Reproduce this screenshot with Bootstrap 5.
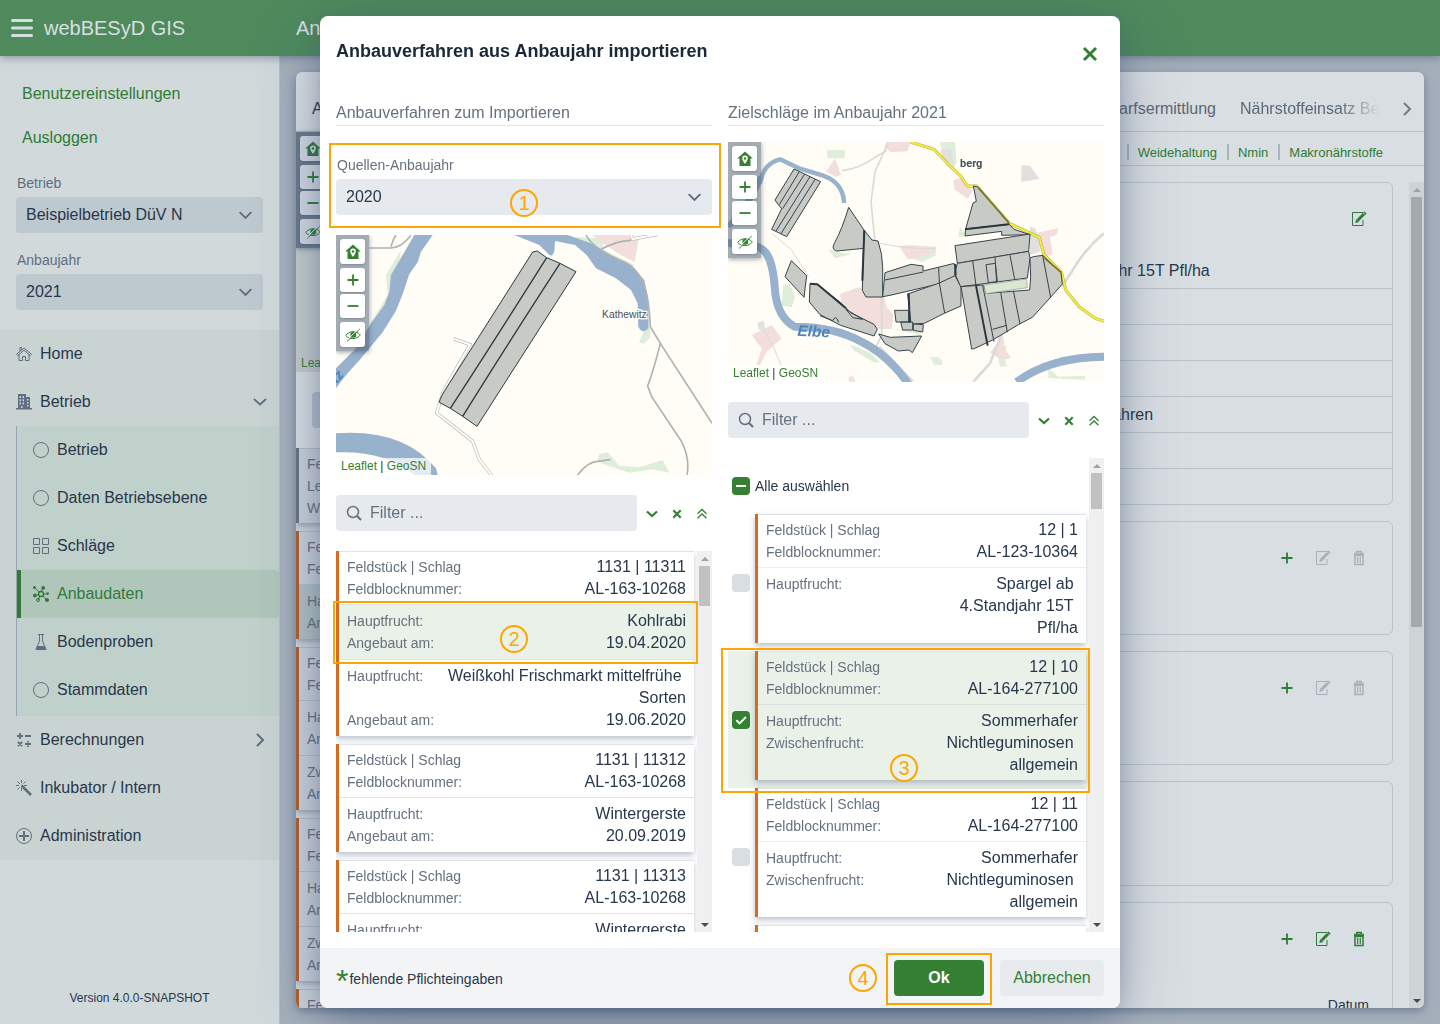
<!DOCTYPE html>
<html lang="de">
<head>
<meta charset="utf-8">
<meta name="viewport" content="width=device-width, initial-scale=1">
<title>webBESyD GIS</title>
<link rel="stylesheet" href="https://cdn.jsdelivr.net/npm/bootstrap@5.3.0/dist/css/bootstrap.min.css">
<style>
:root{--green:#368034;--ink:#28374b;--muted:#66717f;--dimgreen:#2f7b38;--line:#b9c3cc}
body{font-family:"Liberation Sans",Arial,sans-serif;font-size:16px;line-height:24px;color:var(--ink);background:#a5afbb;overflow:hidden}
a{text-decoration:none;color:var(--dimgreen)}
button{font-family:inherit}
svg{display:block}
.ico{width:16px;height:16px;fill:none;stroke:currentColor;flex:none}
.plain-btn{border:0;background:none;padding:0;color:var(--green);display:flex;align-items:center;justify-content:center}
.shrinkable{min-width:0;min-height:0}
/* App shell */
.topbar{height:56px;background:#4f8a5d;color:#d8dfe1;font-size:20px;box-shadow:0 2px 8px rgba(60,80,110,.5);z-index:2}
.topbar h2,.topbar h1{font-size:20px;line-height:24px;font-weight:400;margin:0}
.brand-part{width:296px}
.side{width:280px;background:#d1d9db;border-right:1px solid #b3bec9}
.side-links{padding:26px 22px 0}
.side-links a{display:block;line-height:24px;margin-bottom:20px}
.field-label{display:block;font-size:14px;line-height:20px;color:#616e80;margin-bottom:4px;padding-left:1px}
.field-select{height:36px;border:0;border-radius:4px;padding:0 36px 0 10px;font-size:16px;color:var(--ink);background-color:#bec8cf;background-position:right 11px center;background-size:13px 9px;
 background-image:url("data:image/svg+xml,%3csvg xmlns='http://www.w3.org/2000/svg' viewBox='0 0 13 9'%3e%3cpath fill='none' stroke='%235d6b7d' stroke-width='1.8' stroke-linecap='round' d='M1.2 1.7l5.3 5.2 5.3-5.2'/%3e%3c/svg%3e")}
.side-fields{padding:0 16px;margin-top:3px}
.side-fields .first-select{margin-bottom:17px}
.side-nav{background:#c9d3d2;margin-top:20px}
.side-nav a{display:flex;align-items:center;height:48px;padding:0 11px 0 16px;gap:8px;color:var(--ink)}
.side-nav a>.ico{color:#5f6e80}
.side-sub{margin-left:16px;border-left:1px solid #97a4ad;background:#c0d0ca;padding-bottom:2px}
.side-sub a{padding-left:16px}
.side-sub a.current{background:#b0c6ba;color:var(--dimgreen);border-left:4px solid var(--dimgreen);padding-left:12px;border-radius:0 4px 4px 0}
.side-sub a.current>.ico{color:var(--dimgreen)}
.version{font-size:12px;line-height:20px;padding-bottom:16px}
.panel{background:#d9dee2;border-radius:6px;box-shadow:0 3px 8px rgba(60,80,110,.5);overflow:hidden}
.tabs{height:60px;border-bottom:1px solid var(--line);color:#5b6878;padding:25px 9px 0 16px}
.tab-on{color:var(--ink)}
.tab-fade{-webkit-mask-image:linear-gradient(90deg,#000 72%,transparent 102%);mask-image:linear-gradient(90deg,#000 72%,transparent 102%);width:138px;overflow:hidden;white-space:nowrap}
.tab-next{color:#6c7b90;margin:4px 0 0 21px}
.left-col{width:224px}
.back-map{height:240px;background:linear-gradient(#8f9ca5 0 116px,#c6ccce 116px)}
.back-filter{height:36px;margin:20px 16px;background:#b8c1ce;border-radius:4px}
.subnav{height:34px;border-bottom:1px solid var(--line);font-size:13px;padding:12px 41px 0 0}
.subnav a{line-height:18px;height:16px;display:block;padding-left:9px;border-left:2px solid #a9b4c1;margin-left:10px}
.detail-list{padding:16px 16px 0;overflow:hidden}
.box{border:1px solid var(--line);border-radius:6px;padding:18px 15px 18px 17px;margin-bottom:16px}
.box-main{padding-bottom:35px}
.box-mid{min-height:114px}
.box-low{min-height:105px}
.box-tools{height:36px}
.box-tools button{width:36px;height:36px}
.box-tools .plain-btn{color:var(--dimgreen)}
.box-tools .plain-btn:disabled{color:#a7b1bb}
.info-row{height:36px;border-bottom:1px solid var(--line);margin:0 -15px 0 -17px;padding:6px 0 6px 9px}
.date-head{font-size:14px;line-height:48px}
/* Scroll tracks */
.track{width:15px;background:#f0f0f0;flex:none}
.track i{display:block;height:15px}
.track i::before{content:"";display:block;width:0;margin:0 auto;border:4px solid transparent;border-top:0;border-bottom:4px solid #a0a0a0;transform:translateY(6px)}
.track i:last-child::before{border-bottom:0;border-top:4px solid #454b52}
.thumb{width:11px;margin:0 auto;background:#c1c1c1}
.track-dim{background:#ced4d6}
.track-dim .thumb{background:#a3a9ac}
/* Field cards */
.plot{border-left:3px solid #d56a20;background:#fff;box-shadow:0 3px 6px rgba(60,80,110,.35);margin-bottom:8px}
.plot-part{border-top:1px solid #dfe3e8;padding:5px 8px;line-height:22px}
.plot-part:first-child{padding:4px 8px}
.plot-part.chosen{background:#e9f1e9}
.plot-row{display:flex;justify-content:space-between;gap:8px}
.plot-row span:first-child{font-size:14px;color:var(--muted);white-space:nowrap}
.plot-row span:last-child{text-align:right}
.list-area{min-height:0;flex:1 1 0}
.list-scroll{overflow-y:auto;scrollbar-width:none}
.list-scroll::-webkit-scrollbar{display:none}
.back-list .plot{background:#ccd2db;border-left-color:#ae602c;box-shadow:0 3px 6px rgba(60,80,110,.4)}
.back-list .plot-part{border-color:#b3bdc6;font-size:14px;color:#586576}
.back-list .plot-part.chosen{background:#b4c1c4}
.back-list .plot.neutral{border-left-color:#687583}
/* Dialog */
.veil{position:fixed;inset:0;z-index:10;padding:16px;display:flex;justify-content:center}
.dlg{position:relative;width:800px;max-width:100%;background:#fff;border-radius:8px;box-shadow:0 6px 24px -3px rgba(50,72,108,.35),0 18px 64px -8px rgba(50,72,108,.45)}
.dlg-head{height:85px;padding:23px 14px 0 16px}
.dlg-head h2{font-size:18px;line-height:24px;font-weight:700;color:#1a2838;margin:0}
.dlg-head .plain-btn{width:28px;height:28px}
.dlg-body{padding:0 16px 16px;gap:16px;min-height:0}
.dlg-col{flex:1 1 0;min-width:0;min-height:0}
.dlg-col h3{font-size:16px;line-height:24px;font-weight:400;color:var(--muted);border-bottom:1px solid #e3e6ea;margin:0}
.source-year{padding-top:29px;margin-bottom:20px}
.dlg .field-select{background-color:#e6e9ee}
.dlg .field-label{color:var(--muted)}
.map-right{margin-top:16px}
.map{position:relative;height:240px;overflow:hidden;background:#fffdf5}
.map>svg{width:100%;height:100%}
.map-tools,.back-tools{width:33px;height:116px;background:rgba(72,90,114,.5);box-shadow:0 1px 5px rgba(50,70,100,.5);padding:4px}
.map-tools{position:absolute;left:0;top:0}
.map-tools .plain-btn,.back-tools .plain-btn{width:25px;height:25px;background:#fff;border-radius:3px;margin-bottom:4px;box-shadow:0 1px 2px rgba(50,70,100,.3)}
.back-tools .plain-btn{background:#d5dae2;color:var(--dimgreen)}
.map-tools .zin,.map-tools .zout,.back-tools .zin,.back-tools .zout{height:24px}
.map-tools .zin,.back-tools .zin{margin-bottom:2px}
.credit{position:absolute;left:0;bottom:0;background:rgba(255,255,255,.75);font-size:12px;line-height:17px;padding:0 5px;color:#333}
.credit a{color:var(--green)}
.filter-row{height:36px;margin:20px -2px 20px 0}
.filter-box{height:36px;background:#e6e9ee;border-radius:4px;padding:0 10px;gap:8px;color:#66727f}
.filter-box input{border:0;background:none;outline:0;width:100%;font-size:16px;color:var(--ink);padding:0}
.filter-box input::placeholder{color:#66727f;opacity:1}
.filter-row>.plain-btn{width:25px;height:38px}
.filter-row>.filter-box{margin-right:2px}
.list-left{padding-right:3px}
.pick-all{height:56px;font-size:14px;padding-left:4px;gap:5px}
.form-check-input.tick{width:18px;height:18px;margin:0;border:0;border-radius:4px;background-color:#d9dee2;flex:none}
.form-check-input.tick:checked,.form-check-input.tick:indeterminate{background-color:var(--green)}
.form-check-input.tick:checked{background-image:url("data:image/svg+xml,%3csvg xmlns='http://www.w3.org/2000/svg' viewBox='0 0 18 18'%3e%3cpath fill='none' stroke='%23fff' stroke-width='1.9' d='M4.300 9.200l3.200 3.200L14 6'/%3e%3c/svg%3e")}
.form-check-input.tick:indeterminate{background-image:url("data:image/svg+xml,%3csvg xmlns='http://www.w3.org/2000/svg' viewBox='0 0 18 18'%3e%3cpath stroke='%23fff' stroke-width='2' d='M4 9h10'/%3e%3c/svg%3e")}
.pick{display:flex;align-items:stretch;padding-left:4px}
.pick .form-check-input.tick{align-self:center;margin-right:5px}
.pick .plot{flex:1 1 auto;min-width:0;margin-right:3px}
.pick .plot-part+.plot-part{border-top-color:rgba(40,60,90,.09);padding-bottom:4px}
.pick.chosen,.pick.chosen .plot{background:#e9f1e9}
.pick .plot-row span:last-child{max-width:140px}
.dlg-foot{height:60px;background:#f3f4f6;border-radius:0 0 8px 8px;padding:0 16px;gap:16px}
.star{color:var(--green);font-size:32px;line-height:24px;height:18px}
.foot-note{font-size:14px;padding:2px 0 0 1px}
.act{height:36px;border:0;border-radius:4px;font-size:16px}
.act-ok{width:90px;background:var(--green);color:#fff;font-weight:700}
.act-no{width:104px;background:#e8ebee;color:var(--green)}
.thumb-left{height:40px}.thumb-right{height:36px}.thumb-back{height:52%}
/* Numbered guide marks over the dialog */
.frame{position:absolute;border:2px solid #ffa500;pointer-events:none}
.step{position:absolute;width:28px;height:28px;border:2px solid #ffa500;border-radius:50%;color:#ffa500;font-size:20px;line-height:25px;text-align:center;pointer-events:none}
.f1{left:9px;top:127px;width:392px;height:85px}.f2{left:13px;top:585px;width:365px;height:63px}
.f3{left:401px;top:632px;width:369px;height:145px}.f4{left:566px;top:937px;width:106px;height:52px}
.s1{left:190px;top:173px}.s2{left:180px;top:609px}.s3{left:570px;top:738px}.s4{left:529px;top:948px}
</style>
</head>
<body>
<svg width="0" height="0" class="position-absolute" aria-hidden="true">
 <symbol id="home" viewBox="0 0 16 16"><path d="M.5 8.3L8 2l7.500 6.300L14.300 9.500 8 4.200 1.700 9.500z M3 8.500V14.500H6.500V10.500H9.500V14.500H13V8.500M4 5V1.500H5.500V3.500"/></symbol>
 <symbol id="build" viewBox="0 0 16 16"><path fill="currentColor" stroke="none" fill-rule="evenodd" d="M2 0h8v3h4v11h2v1.500H0V14h2zM3.500 2v2h1.500V2zm3 0v2H8V2zm-3 3.200v2h1.500v-2zm3 0v2H8v-2zm-3 3.200v2h1.500v-2zm3 0v2H8v-2zM5 12v2h1.500v-2zM11 5v1.500h1.500V5zm0 3v1.500h1.500V8zm0 3v1.500h1.500V11z"/></symbol>
 <symbol id="ring" viewBox="0 0 16 16"><circle cx="8" cy="8" r="7.500"/></symbol>
 <symbol id="grid4" viewBox="0 0 16 16"><path d="M.5.500h6v6h-6zM9.500.500h6v6h-6zM.5 9.500h6v6h-6zM9.500 9.500h6v6h-6z"/></symbol>
 <symbol id="nodes" viewBox="0 0 16 16"><path d="M2 2l4 4M10 2L8.500 5M11 8h4M2 9.500L5.500 8.500M7 10.500L5 14M10 10l4 4"/><circle cx="8" cy="8" r="2.500" stroke-width="1.400"/><g fill="currentColor" stroke="none"><circle cx="1.500" cy="1.500" r="1.500"/><circle cx="10.200" cy="1.900" r="1.900"/><circle cx="14.700" cy="7.500" r="1.300"/><circle cx="1.900" cy="9.500" r="1.900"/><circle cx="14" cy="14" r="2"/></g><circle cx="5" cy="14" r="1.500"/></symbol>
 <symbol id="flask" viewBox="0 0 16 16"><path d="M5 .500h6M6.500.500V7L3 15.500h10L9.500 7V.500"/><path fill="currentColor" d="M4.500 12.500h7l1.500 3H3z"/></symbol>
 <symbol id="calc" viewBox="0 0 16 16"><path stroke-width="1.800" d="M1 4h6M4 1v6M9 4h6M1.800 9.800l4.400 4.400M6.200 9.800L1.800 14.200M9 12h6M12 9v1.500M12 13.500V15"/></symbol>
 <symbol id="wand" viewBox="0 0 16 16"><path d="M5.500 0v3M0 5.500h3M1.500 1.500l2.500 2.500M9.500 1.500L7.500 3.500M8 5.500h3M1.500 9.500l2-2M5.500 8v3"/><path stroke-width="2.600" d="M5.500 5.500l9.500 9.500"/></symbol>
 <symbol id="pluscirc" viewBox="0 0 16 16"><circle cx="8" cy="8" r="7.500"/><path stroke-width="2" d="M8 3v10M3 8h10"/></symbol>
 <symbol id="down" viewBox="0 0 16 16"><path stroke-width="1.800" stroke-linecap="round" d="M2.500 5.500L8 10.500l5.500-5"/></symbol>
 <symbol id="right" viewBox="0 0 16 16"><path stroke-width="2" stroke-linecap="round" d="M5.500 2.500L11 8l-5.500 5.500"/></symbol>
 <symbol id="bolddown" viewBox="0 0 16 16"><path stroke-width="2.300" d="M3 5.500L8 10l5-4.500"/></symbol>
 <symbol id="cross" viewBox="0 0 16 16"><path stroke-width="2.200" d="M4.300 4.300l7.400 7.400M11.700 4.300L4.300 11.700"/></symbol>
 <symbol id="dblup" viewBox="0 0 16 16"><path stroke-width="1.300" d="M3.500 7.700L8 3.500l4.500 4.200M3.500 12.200L8 8l4.500 4.200"/></symbol>
 <symbol id="search" viewBox="0 0 16 16"><circle cx="7" cy="7" r="5.500" stroke-width="1.500"/><path stroke-width="2.200" d="M11 11l4 4"/></symbol>
 <symbol id="homepin" viewBox="0 0 16 16"><path fill="currentColor" stroke="none" fill-rule="evenodd" d="M8 .500L15.800 7.500H13.500V15H2.500V7.500H.200zM8 4.500a2.800 2.800 0 0 0-2.800 2.800C5.200 9.500 8 13 8 13s2.800-3.500 2.800-5.700A2.800 2.800 0 0 0 8 4.500zM8 6.200a1.300 1.300 0 1 1 0 2.600A1.300 1.300 0 0 1 8 6.200z"/></symbol>
 <symbol id="plus" viewBox="0 0 16 16"><path stroke-width="1.800" d="M8 2.500v11M2.500 8h11"/></symbol>
 <symbol id="minus" viewBox="0 0 16 16"><path stroke-width="1.800" d="M2.500 8h11"/></symbol>
 <symbol id="eyeoff" viewBox="0 0 16 16"><path d="M.7 8.500C4 3.500 12 3.500 15.300 8 12 12.700 4 12.700.7 8.500z"/><circle cx="8.300" cy="7.800" r="3" fill="currentColor" stroke="none"/><path stroke="#fff" d="M14 1.500L1.500 13.500"/><path d="M14.700 2L2 14.500"/></symbol>
 <symbol id="edit" viewBox="0 0 16 16"><path d="M12 1.500H1.500v13h10.500V9"/><path stroke-width="3" d="M6.800 9.200L13 3"/><path fill="currentColor" stroke="none" d="M5.200 8L4.300 12 8.300 11zM12 1.200l1.500-.7 2 2-1 1.500z"/></symbol>
 <symbol id="bin" viewBox="0 0 16 16"><path stroke-width="1.500" d="M5.700 3V1.500h4.600V3M3 4h10M4 5.500v9h8v-9z"/><path d="M6.700 7v6M9.300 7v6" stroke-width="1.200"/><path opacity=".5" stroke-width="3" d="M3 4h10"/></symbol>
</svg>

<div class="d-flex flex-column vh-100">
 <header class="topbar d-flex align-items-center flex-shrink-0">
  <div class="brand-part d-flex align-items-center gap-2 ps-2">
   <button class="plain-btn text-reset" aria-label="Menü"><svg width="28" height="24" viewBox="0 0 28 24" fill="none" stroke="currentColor" stroke-width="3" stroke-linecap="round"><path d="M4.500 4.500h19M4.500 12h19M4.500 19.500h19"/></svg></button>
   <h1>webBESyD GIS</h1>
  </div>
  <h2>Anbaudaten</h2>
 </header>
 <div class="d-flex flex-fill shrinkable">
  <aside class="side d-flex flex-column flex-shrink-0">
   <div class="side-links"><a href="#">Benutzereinstellungen</a><a href="#">Ausloggen</a></div>
   <div class="side-fields">
    <label class="field-label" for="farm">Betrieb</label>
    <select class="form-select field-select first-select" id="farm"><option>Beispielbetrieb DüV N</option></select>
    <label class="field-label" for="year">Anbaujahr</label>
    <select class="form-select field-select" id="year"><option>2021</option></select>
   </div>
   <nav class="side-nav">
    <a href="#"><svg class="ico"><use href="#home"/></svg>Home</a>
    <a href="#"><svg class="ico"><use href="#build"/></svg>Betrieb<svg class="ico ms-auto"><use href="#down"/></svg></a>
    <div class="side-sub">
     <a href="#"><svg class="ico"><use href="#ring"/></svg>Betrieb</a>
     <a href="#"><svg class="ico"><use href="#ring"/></svg>Daten Betriebsebene</a>
     <a href="#"><svg class="ico"><use href="#grid4"/></svg>Schläge</a>
     <a href="#" class="current"><svg class="ico"><use href="#nodes"/></svg>Anbaudaten</a>
     <a href="#"><svg class="ico"><use href="#flask"/></svg>Bodenproben</a>
     <a href="#"><svg class="ico"><use href="#ring"/></svg>Stammdaten</a>
    </div>
    <a href="#"><svg class="ico"><use href="#calc"/></svg>Berechnungen<svg class="ico ms-auto"><use href="#right"/></svg></a>
    <a href="#"><svg class="ico"><use href="#wand"/></svg>Inkubator / Intern</a>
    <a href="#"><svg class="ico"><use href="#pluscirc"/></svg>Administration</a>
   </nav>
   <div class="version text-center mt-auto">Version 4.0.0-SNAPSHOT</div>
  </aside>
  <main class="flex-fill p-3 d-flex shrinkable">
   <div class="panel d-flex flex-column flex-fill">
    <div class="tabs d-flex flex-shrink-0">
     <span class="tab-on">Anbau</span>
     <span class="ms-auto me-4">Düngebedarfsermittlung</span>
     <span class="tab-fade">Nährstoffeinsatz Betrieb</span>
     <svg class="ico tab-next"><use href="#right"/></svg>
    </div>
    <div class="d-flex flex-fill shrinkable">
     <div class="left-col d-flex flex-column flex-shrink-0">
      <div class="back-map position-relative flex-shrink-0">
       <div class="back-tools">
        <button class="plain-btn" aria-label="Übersicht"><svg class="ico"><use href="#homepin"/></svg></button>
        <button class="plain-btn zin" aria-label="Vergrößern"><svg class="ico"><use href="#plus"/></svg></button>
        <button class="plain-btn zout" aria-label="Verkleinern"><svg class="ico"><use href="#minus"/></svg></button>
        <button class="plain-btn" aria-label="Ausblenden"><svg class="ico"><use href="#eyeoff"/></svg></button>
       </div>
       <div class="credit bg-transparent"><a href="#">Leaflet</a></div>
      </div>
      <div class="back-filter flex-shrink-0"></div>
      <div class="back-list overflow-hidden" id="backList"></div>
     </div>
     <div class="flex-fill d-flex flex-column shrinkable">
      <div class="subnav d-flex justify-content-end flex-shrink-0"><a href="#">Weidehaltung</a><a href="#">Nmin</a><a href="#">Makronährstoffe</a></div>
      <div class="d-flex flex-fill shrinkable">
       <div class="detail-list flex-fill">
        <section class="box box-main">
         <div class="box-tools d-flex justify-content-end"><button class="plain-btn" aria-label="Bearbeiten"><svg class="ico"><use href="#edit"/></svg></button></div>
         <div class="info-row d-flex mt-3"><span class="w-50"></span><span>Spargel ab 4.Standjahr 15T Pfl/ha</span></div>
         <div class="info-row"></div><div class="info-row"></div><div class="info-row"></div>
         <div class="info-row d-flex"><span class="w-50"></span><span>Standard-Anbauverfahren</span></div>
         <div class="info-row"></div>
        </section>
        <section class="box box-mid"><div class="box-tools d-flex justify-content-end"><button class="plain-btn" aria-label="Hinzufügen"><svg class="ico"><use href="#plus"/></svg></button><button class="plain-btn" disabled aria-label="Bearbeiten"><svg class="ico"><use href="#edit"/></svg></button><button class="plain-btn" disabled aria-label="Löschen"><svg class="ico"><use href="#bin"/></svg></button></div></section>
        <section class="box box-mid"><div class="box-tools d-flex justify-content-end"><button class="plain-btn" aria-label="Hinzufügen"><svg class="ico"><use href="#plus"/></svg></button><button class="plain-btn" disabled aria-label="Bearbeiten"><svg class="ico"><use href="#edit"/></svg></button><button class="plain-btn" disabled aria-label="Löschen"><svg class="ico"><use href="#bin"/></svg></button></div></section>
        <section class="box box-low"></section>
        <section class="box"><div class="box-tools d-flex justify-content-end"><button class="plain-btn" aria-label="Hinzufügen"><svg class="ico"><use href="#plus"/></svg></button><button class="plain-btn" aria-label="Bearbeiten"><svg class="ico"><use href="#edit"/></svg></button><button class="plain-btn" aria-label="Löschen"><svg class="ico"><use href="#bin"/></svg></button></div>
         <div class="date-head text-end pt-4 pe-2">Datum</div></section>
       </div>
       <div class="track track-dim d-flex flex-column mt-3"><i></i><div class="thumb thumb-back"></div><i class="mt-auto"></i></div>
      </div>
     </div>
    </div>
   </div>
  </main>
 </div>
</div>

<div class="veil">
 <div class="dlg d-flex flex-column" role="dialog" aria-labelledby="dlgTitle">
  <div class="dlg-head d-flex justify-content-between flex-shrink-0"><h2 id="dlgTitle">Anbauverfahren aus Anbaujahr importieren</h2>
   <button class="plain-btn" aria-label="Schließen"><svg width="28" height="28" viewBox="0 0 28 28" fill="none" stroke="currentColor" stroke-width="3"><path d="M6 9l12 12M18 9l-12 12"/></svg></button></div>
  <div class="dlg-body d-flex flex-fill">
   <section class="dlg-col d-flex flex-column">
    <h3>Anbauverfahren zum Importieren</h3>
    <div class="source-year"><label class="field-label" for="srcYear">Quellen-Anbaujahr</label>
     <select class="form-select field-select" id="srcYear"><option>2020</option></select></div>
    <div class="map flex-shrink-0">
     <svg viewBox="30 315 1128 720" preserveAspectRatio="xMidYMid slice" fill="none">
      <path fill="#dfeedb" d="M225 360l-45 75 5 60-55 90 40-30 40-90zM730 320l95 5 10 35 90 45-5 10-110-45zM962 500l12 120-20 22-15-5 15-35zM820 972l25-5 35 40 60 5 70-22 20 38-50-10-70 10-75-25-22-8z"/>
      <path fill="#f2dedb" d="M800 315h115l5 15 18-2-12 68-40-20-70-45z"/>
      <path fill="#98b1cd" d="M265 315h55l-35 50-10 32-25 35-20 60-20 50-40 65-75 90q-30 30-65 78v-60l60-60 45-75 40-55 15-40 5-50 35-60zM565 315h160l70 25 60 35 60 30 40 45 12 60v85q-16 20-30-5l-2-70-20-40-45-35-60-30-28-40-35-30-60-12-2 30q-5 18-15 12l-30-30zM30 910q200-15 300 105l5 20h-70q-90-75-235-68z"/>
      <g><path stroke="#b9bcbb" stroke-width="10" d="M382 626l50 18-80 140-20 65 108 85 20 55 38 48M915 315l5 12 75-14"/><path stroke="#fff" stroke-width="6" d="M382 626l50 18-80 140-20 65 108 85 20 55 38 48M915 315l5 12 75-14"/></g>
      <g stroke="#b0b3b2" stroke-width="5"><path d="M130 354h60q35 2 65-38M195 350q5-20 15-35M780 315q20 40 100 75 50 15 75 75 15 50 18 125l30 50q-20 80-38 128l12 32 90 135q25 50 16 100M1003 640l155 240M825 358q45-25 90-27M755 1035q30-40 60-41l38-5"/></g>
      <path fill="#c7cac5" stroke="#2d3a42" stroke-width="3" d="M620 366l14-3 28 20 40 17 48 25-297 464-43-30-37-24-33-18q2-15 30-57z"/>
      <path stroke="#2d3a42" stroke-width="4" d="M662 383Q500 640 373 835M702 400Q540 650 410 859"/>
      <text x="828" y="564" font-size="31" font-family="Liberation Sans, sans-serif" fill="#4c5154" stroke="#fff" stroke-width="7" paint-order="stroke">Kathewitz</text>
      <text x="32" y="762" font-size="42" font-style="italic" font-weight="700" fill="#4a84c0" transform="rotate(-50 32 762)">tz</text>
     </svg>
     <div class="map-tools">
      <button class="plain-btn" aria-label="Übersicht"><svg class="ico"><use href="#homepin"/></svg></button>
      <button class="plain-btn zin" aria-label="Vergrößern"><svg class="ico"><use href="#plus"/></svg></button>
      <button class="plain-btn zout" aria-label="Verkleinern"><svg class="ico"><use href="#minus"/></svg></button>
      <button class="plain-btn" aria-label="Ausblenden"><svg class="ico"><use href="#eyeoff"/></svg></button>
     </div>
     <div class="credit"><a href="#">Leaflet</a> | <a href="#">GeoSN</a></div>
    </div>
    <div class="filter-row d-flex flex-shrink-0 align-items-start">
     <div class="filter-box d-flex align-items-center flex-fill"><svg class="ico"><use href="#search"/></svg><input type="text" aria-label="Filter Quelle" placeholder="Filter ..."></div>
     <button class="plain-btn" aria-label="Öffnen"><svg class="ico"><use href="#bolddown"/></svg></button><button class="plain-btn" aria-label="Leeren"><svg class="ico"><use href="#cross"/></svg></button><button class="plain-btn" aria-label="Einklappen"><svg class="ico"><use href="#dblup"/></svg></button>
    </div>
    <div class="d-flex list-area">
     <div class="list-scroll list-left flex-fill" id="sourceList"></div>
     <div class="track d-flex flex-column"><i></i><div class="thumb thumb-left"></div><i class="mt-auto"></i></div>
    </div>
   </section>
   <section class="dlg-col d-flex flex-column">
    <h3>Zielschläge im Anbaujahr 2021</h3>
    <div class="map map-right flex-shrink-0">
     <svg viewBox="24 36 1128 720" preserveAspectRatio="xMidYMid slice" fill="none" stroke-linejoin="round">
      <path fill="#dfeedb" d="M322 60h52v25h-52zM660 36h45l5 60-12 25-20-15zM720 290l15 20-5 10h-15zM325 358l40 10 30 5-50 12zM190 465l20-3 15 40-10 30-30-5zM575 385l70-30 2 22-40 20zM520 598h90l-10 16zM390 643l60 25 30 30-20-2-60-35zM630 680l25 2 12 10v14l-25-2zM830 665l30-20-5 40 5 25h-20zM985 715l30 25 80-3v12l-110-5z"/>
      <path fill="#f2dedb" d="M345 85l18 50-15 5-30-15zM492 50l10-14h70l-10 28-50 3zM700 150l30-8 28 40-15 25-40-30zM538 350l20-5 90 5v15l-70 22h-15zM945 310l70-15-5 20-20 5 8 55-30 3zM360 492l55-20 75 20 10 40 20 20-5 45h-60l-50-30-40-40zM95 615l60-30 30 40-45 40-20 40h-10l15-50zM810 668l40-50 5 40 18 25-10 5-30-5zM385 742l12-5 10 18h-20z"/>
      <path fill="#e0e0df" d="M905 105l25 2 28 40-55 8zM930 290l15 5 10 25 5 45-30 10zM662 60l30-5 8 45-30-10zM112 578l20-5 3 25-18 2z"/>
      <g stroke="#d9dad9" stroke-width="5"><path d="M505 36l-40 90-12 90 12 120 20 160v120l-15 30 8 30M365 122q50-5 100-40l35-20"/><path stroke-width="3" d="M155 310l60 50 50 80M480 340q100 20 165 15M130 600l30 50 25 60"/><path stroke-width="8" d="M478 650l100 104M1152 310q-60 50-100 120L1025 470M850 600l-40 100-50 55"/></g>
      <path stroke="#98b1cd" stroke-width="24" d="M24 340q90-5 115 30 20 30 25 100 5 90 60 120 120 0 200 45 80 40 140 125M890 756q100-75 262-76"/>
      <path stroke="#98b1cd" stroke-width="13" d="M120 160q10-60 60-72l60 28 60 18q70 20 72 85"/><path stroke="#98b1cd" stroke-width="18" d="M24 290q60-60 100-150"/>
      <path stroke="#b5ad4a" stroke-width="9" d="M572 36l70 22 40 42 40 38 20 30h28l98 112 90 42 14 52 52 52 14 55 40 50 50 35 25 8"/>
      <path stroke="#f5ee3a" stroke-width="6" d="M572 36l70 22 40 42 40 38 20 30h28l98 112 90 42 14 52 52 52 14 55 40 50 50 35 25 8"/>
      <g fill="#c7cac5" stroke="#37444c" stroke-width="3">
       <path d="M222 117l80 38-102 165-45-22 30-62-10-12-10-14z"/>
       <path fill="none" d="M238 125L178 224M254 132L188 236M270 140L168 303M286 147L183 311"/>
       <path d="M386 232l46 68v55l-82 8q-18-5-6-25 22-40 42-106z"/>
       <path d="M432 300l24 30 18 3q14 40 14 80v88h-50l-11-20z"/>
       <path d="M214 392l46 45-8 65-57-62z"/>
       <path d="M270 461l22 2 70 55 30 30 70 35 10 15-10 20-100-32-62-32-32-38z"/>
       <path fill="none" d="M300 557l38 15q10-20 18 5M378 538l50 30-30-5z"/>
       <path d="M476 612l35 10 94-4-28 50-10-8-32 3-40-22z"/>
       <path d="M495 428l78-25 36 5v15l90-22 8 2 5 38-52 20-150 35-22 4z"/>
       <path d="M658 459l47-22 18 33v58l-50 22-60 30-40 2-10-90z"/>
       <path fill="none" d="M495 450l115-24M656 413l2 46 16 90"/>
       <path d="M524 541h42v35h-38zM542 576h36v24h-30zM580 582l30 2-2 22-28-5z"/>
       <path d="M760 168l14 3 92 108 2 4-131 14 22-78 10-5z"/><path d="M737 297l131-14 14 15 48 16-85 2v-12l-110 14z"/>
       <path d="M705 347l225-35-4 52-214 36z"/><path d="M712 400l214-36 4 20-8 60-200 26-18-40z"/>
       <path d="M930 384l10-4 28-4 55 52 4 34-40 45-50 55-42 22-75 45-60 28h-5l-32-187 68-5 8 25 130-10 3-38z"/>
       <path fill="#dbe7d2" stroke="#8d9a8d" stroke-width="2" d="M792 465l128-18 2 26-125 18z"/>
       <path fill="none" d="M758 392l10 75M825 382l5 75M870 376l14 72M798 404l28-4 6 55-27 3zM788 467l34 168M842 487l20 120M880 482l20 100M968 376l24 126M818 598l42-12"/>
      </g>
      <path stroke="#2b3840" stroke-width="6" d="M735 298l131-15M433 302l-6 150M566 490l3 88M705 402l2 35M768 467l35 180M270 461l22 2 86 72"/>
      <path stroke="#77762f" stroke-width="5" d="M774 172l92 106M974 384l50 44"/>
      <text x="720" y="112" font-size="33" font-weight="700" font-family="Roboto, sans-serif" fill="#4a5055" stroke="#fff" stroke-width="5" paint-order="stroke">berg</text>
      <text x="232" y="617" font-size="46" font-style="italic" font-weight="700" font-family="Liberation Sans, sans-serif" fill="#4d83bb" transform="rotate(3 232 617)">Elbe</text>
     </svg>
     <div class="map-tools">
      <button class="plain-btn" aria-label="Übersicht"><svg class="ico"><use href="#homepin"/></svg></button>
      <button class="plain-btn zin" aria-label="Vergrößern"><svg class="ico"><use href="#plus"/></svg></button>
      <button class="plain-btn zout" aria-label="Verkleinern"><svg class="ico"><use href="#minus"/></svg></button>
      <button class="plain-btn" aria-label="Ausblenden"><svg class="ico"><use href="#eyeoff"/></svg></button>
     </div>
     <div class="credit"><a href="#">Leaflet</a> | <a href="#">GeoSN</a></div>
    </div>
    <div class="filter-row d-flex flex-shrink-0 align-items-start">
     <div class="filter-box d-flex align-items-center flex-fill"><svg class="ico"><use href="#search"/></svg><input type="text" aria-label="Filter Ziel" placeholder="Filter ..."></div>
     <button class="plain-btn" aria-label="Öffnen"><svg class="ico"><use href="#bolddown"/></svg></button><button class="plain-btn" aria-label="Leeren"><svg class="ico"><use href="#cross"/></svg></button><button class="plain-btn" aria-label="Einklappen"><svg class="ico"><use href="#dblup"/></svg></button>
    </div>
    <div class="d-flex list-area">
     <div class="list-scroll flex-fill">
      <div class="pick-all d-flex align-items-center"><input class="form-check-input tick" type="checkbox" id="all"><label for="all">Alle auswählen</label></div>
      <div id="targetList"></div>
     </div>
     <div class="track d-flex flex-column"><i></i><div class="thumb thumb-right"></div><i class="mt-auto"></i></div>
    </div>
   </section>
  </div>
  <footer class="dlg-foot d-flex align-items-center flex-shrink-0">
   <div class="d-flex align-items-center me-auto"><span class="star">*</span><span class="foot-note">fehlende Pflichteingaben</span></div>
   <button class="act act-ok">Ok</button><button class="act act-no">Abbrechen</button>
  </footer>
  <div class="frame f1"></div><div class="frame f2"></div><div class="frame f3"></div><div class="frame f4"></div>
  <div class="step s1">1</div><div class="step s2">2</div><div class="step s3">3</div><div class="step s4">4</div>
 </div>
</div>
<script src="https://cdn.jsdelivr.net/npm/bootstrap@5.3.0/dist/js/bootstrap.bundle.min.js"></script>
<script>
const row = ([label, value = '']) => `<div class="plot-row"><span>${label}</span><span>${value}</span></div>`;
const part = (p) => `<div class="plot-part${p.on ? ' chosen' : ''}">${p.rows.map(row).join('')}</div>`;
const plot = (parts, extra = '') => `<div class="plot ${extra}">${parts.map(part).join('')}</div>`;
const head = (no, block) => ({rows: [['Feldstück | Schlag', no], ['Feldblocknummer:', block]]});

document.getElementById('sourceList').innerHTML = [
  [head('1131 | 11311', 'AL-163-10268'),
   {on: true, rows: [['Hauptfrucht:', 'Kohlrabi'], ['Angebaut am:', '19.04.2020']]},
   {rows: [['Hauptfrucht:', 'Weißkohl Frischmarkt mittelfrühe&nbsp;<br>Sorten'], ['Angebaut am:', '19.06.2020']]}],
  [head('1131 | 11312', 'AL-163-10268'), {rows: [['Hauptfrucht:', 'Wintergerste'], ['Angebaut am:', '20.09.2019']]}],
  [head('1131 | 11313', 'AL-163-10268'), {rows: [['Hauptfrucht:', 'Wintergerste'], ['Angebaut am:', '20.09.2019']]}]
].map(p => plot(p)).join('');

const oats = [['Hauptfrucht:', 'Sommerhafer'], ['Zwischenfrucht:', 'Nichtleguminosen&nbsp;<br>allgemein']];
document.getElementById('targetList').innerHTML = [
  {no: '12 | 1', block: 'AL-123-10364', rows: [['Hauptfrucht:', 'Spargel ab&nbsp;<br>4.Standjahr 15T&nbsp;<br>Pfl/ha']]},
  {no: '12 | 10', block: 'AL-164-277100', rows: oats, on: true},
  {no: '12 | 11', block: 'AL-164-277100', rows: oats},
  {no: '12 | 12', block: 'AL-164-277100', rows: oats}
].map(t => `<div class="pick${t.on ? ' chosen' : ''}"><input class="form-check-input tick" type="checkbox" aria-label="${t.no}"${t.on ? ' checked' : ''}>${plot([head(t.no, t.block), {rows: t.rows}])}</div>`).join('');
document.getElementById('all').indeterminate = true;

const names = (...n) => ({rows: n.map(x => [x])});
const crop = () => names('Hauptfrucht', 'Angebaut'), catchCrop = () => names('Zwischenfrucht', 'Angebaut'), id = () => names('Feldstück', 'Feldblock');
document.getElementById('backList').innerHTML =
  plot([names('Feldstück', 'Leistung', 'Wert')], 'neutral') +
  plot([id(), {...crop(), on: true}]) + plot([id(), crop(), catchCrop()]) + plot([id(), crop(), catchCrop()]) + plot([id(), crop()]);
</script>
</body>
</html>
